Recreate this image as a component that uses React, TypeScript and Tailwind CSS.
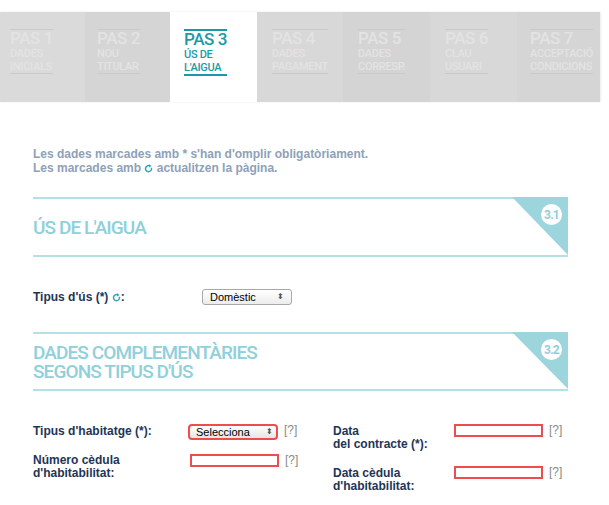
import React from "react";

const tabs = [
  { n: "PAS 1", a: "DADES", b: "INICIALS", w: 85, pl: 10, bg: "bg-[#dadada]" },
  { n: "PAS 2", a: "NOU", b: "TITULAR", w: 85, pl: 12, bg: "bg-[#d5d5d5]" },
  { n: "PAS 3", a: "ÚS DE", b: "L'AIGUA", w: 87, pl: 14, bg: "bg-white", active: true },
  { n: "PAS 4", a: "DADES", b: "PAGAMENT", w: 86, pl: 15, bg: "bg-[#d8d8d8]" },
  { n: "PAS 5", a: "DADES", b: "CORRESP.", w: 87, pl: 15, bg: "bg-[#d4d4d4]" },
  { n: "PAS 6", a: "CLAU", b: "USUARI", w: 87, pl: 15, bg: "bg-[#d8d8d8]" },
  { n: "PAS 7", a: "ACCEPTACIÓ", b: "CONDICIONS", w: 83, pl: 13, bg: "bg-[#d5d5d5]" },
];

const cond = { fontFamily: 'Roboto, "Liberation Sans", sans-serif' };
const arial = { fontFamily: '"Liberation Sans", Arial, sans-serif' };

function Refresh({ size = 9 }: { size?: number }) {
  return (
    <svg width={size} height={size} viewBox="0 0 10 10" className="inline-block align-[-1px]">
      <path d="M8.3 4.2 A3.4 3.4 0 1 1 6.6 2.1" fill="none" stroke="#29a3b8" strokeWidth="1.6" />
      <path d="M5.6 0.4 L8.4 2.2 L5.6 3.9 Z" fill="#29a3b8" />
    </svg>
  );
}

function SectionHeader({ lines, num, h }: { lines: string[]; num: string; h: number }) {
  return (
    <div className="relative w-[535px] border-y-2 border-[#b4e1e6] flex flex-col justify-center" style={{ height: h }}>
      <div className="text-[19px] leading-[19px] text-[#8fd0da] font-medium tracking-[-0.9px]" style={cond}>
        {lines.map((l) => (
          <div key={l}>{l}</div>
        ))}
      </div>
      <svg className="absolute right-0 top-[-2px]" width="56" height={h} viewBox={`0 0 56 ${h}`}>
        <polygon points={`0,0 56,0 56,${h - 2}`} fill="#9dd5dd" />
      </svg>
      <div
        className="absolute right-[6px] top-[5px] w-[21px] h-[21px] rounded-full bg-white text-[#8fcfd9] text-[12px] font-bold flex items-center justify-center tracking-[-0.8px]"
        style={cond}
      >
        {num}
      </div>
    </div>
  );
}

function Help() {
  return <span className="text-[12px] text-[#8a8a8a] ml-[6px] leading-none font-normal" style={arial}>[?]</span>;
}

function TextBox() {
  return <div className="w-[89px] h-[13px] border-2 border-[#ef4d4d] bg-white" />;
}

export default function App() {
  return (
    <div className="w-[609px] h-[505px] bg-white overflow-hidden" style={arial}>
      <div className="pt-[12px] flex">
        <div className="flex h-[90px] shadow-[1px_0_2px_rgba(0,0,0,0.08)]">
          {tabs.map((t) => (
            <div key={t.n} className={`${t.bg} h-full shrink-0 overflow-hidden`} style={{ width: t.w, paddingLeft: t.pl }}>
              <div
                className={`inline-flex flex-col mt-[17px] ${
                  t.active ? "border-[#1a9aa8] border-y-2 text-[#1a9aa8]" : "border-y border-[#cacaca] text-[#e3e3e3]"
                }`}
                style={cond}
              >
                <div className="text-[17px] leading-[17px] font-medium tracking-[-0.4px]">{t.n}</div>
                <div className="text-[11px] leading-[13px] font-medium tracking-[-0.3px]">{t.a}</div>
                <div className="text-[11px] leading-[13px] font-medium tracking-[-0.3px]">{t.b}</div>
              </div>
            </div>
          ))}
        </div>
      </div>

      <div className="pl-[33px]">
        <div className="mt-[45px] text-[12px] leading-[14px] font-bold text-[#8ea1b7]">
          <div>Les dades marcades amb * s'han d'omplir obligatòriament.</div>
          <div>
            Les marcades amb <Refresh /> actualitzen la pàgina.
          </div>
        </div>

        <div className="mt-[22px]">
          <SectionHeader lines={["ÚS DE L'AIGUA"]} num="3.1" h={60} />
        </div>

        <div className="mt-[32px] flex items-center h-[16px]">
          <div className="w-[169px] text-[12px] font-bold text-[#1e3556]">
            Tipus d'ús (*) <Refresh size={9} />:
          </div>
          <div className="w-[90px] h-[16px] rounded-[3px] border border-[#a8a8a8] bg-gradient-to-b from-white to-[#ececec] flex items-center justify-between px-[7px] text-[11px] text-black">
            <span>Domèstic</span>
            <span className="text-[8px] text-[#555] leading-none">⬍</span>
          </div>
        </div>

        <div className="mt-[27px]">
          <SectionHeader lines={["DADES COMPLEMENTÀRIES", "SEGONS TIPUS D'ÚS"]} num="3.2" h={59} />
        </div>

        <div className="mt-[33px] flex text-[12px] font-bold text-[#1e3556] leading-[13px]">
          <div className="w-[300px] flex flex-col gap-[14px]">
            <div className="flex items-start">
              <div className="w-[155px] pt-[1px]">Tipus d'habitatge (*):</div>
              <div className="w-[90px] h-[16px] rounded-[4px] border-2 border-[#ef4d4d] bg-gradient-to-b from-white to-[#e6e6e6] flex items-center justify-between pl-[6px] pr-[3px] text-[11px] text-black font-normal">
                <span>Selecciona</span>
                <span className="text-[8px] text-[#555] leading-none">⬍</span>
              </div>
              <Help />
            </div>
            <div className="flex items-start">
              <div className="w-[157px]">
                Número cèdula
                <br />
                d'habitabilitat:
              </div>
              <TextBox />
              <Help />
            </div>
          </div>
          <div className="flex flex-col gap-[15px]">
            <div className="flex items-start">
              <div className="w-[121px] pt-[1px]">
                Data
                <br />
                del contracte (*):
              </div>
              <TextBox />
              <Help />
            </div>
            <div className="flex items-start">
              <div className="w-[121px] pt-[1px]">
                Data cèdula
                <br />
                d'habitabilitat:
              </div>
              <TextBox />
              <Help />
            </div>
          </div>
        </div>
      </div>
    </div>
  );
}
